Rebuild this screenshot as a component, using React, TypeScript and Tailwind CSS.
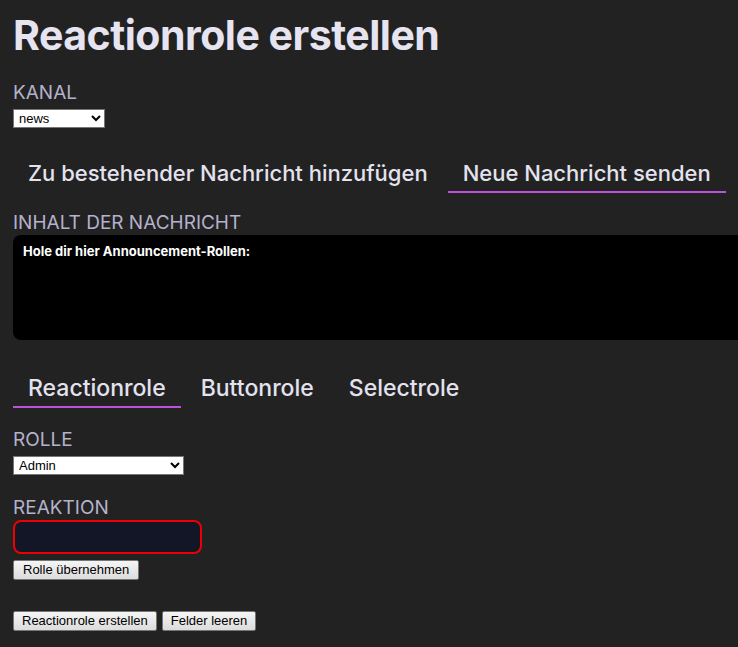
const labelCls = "block text-[19px] leading-[24px] text-[#b4b2cc] uppercase";
const selectCls =
  "h-[19px] bg-white border border-[#767676] text-black text-[13px] leading-[17px] pl-[1px] font-['Liberation_Sans',Arial,sans-serif]";
const btnCls =
  "h-[20px] px-[8px] text-[13px] leading-[16px] text-black border border-[#767676] rounded-[2px] bg-gradient-to-b from-[#f5f5f5] to-[#dcdcdc] font-['Liberation_Sans',Arial,sans-serif]";

const Tab = ({ label, active, big }: { label: string; active?: boolean; big?: boolean }) => (
  <div
    className={`px-[15px] pt-[6px] pb-[4px] leading-[28px] font-medium text-[#e4e2ef] border-b-2 ${
      big ? "text-[23px]" : "text-[22px]"
    } ${active ? "border-[#c050dc]" : "border-transparent"}`}
  >
    {label}
  </div>
);

const App = () => {
  return (
    <div className="h-screen w-full overflow-hidden bg-[#222222] pl-[13px] font-['Inter',sans-serif] text-[#e4e2ef]">
      <h1 className="pt-[9px] text-[41px] leading-[52px] font-bold tracking-[-0.5px] text-[#e6e4f0]">
        Reactionrole erstellen
      </h1>

      <div className="mt-[20px]">
        <label className={labelCls}>Kanal</label>
        <select className={`${selectCls} mt-[4px] w-[92px]`} defaultValue="news">
          <option>news</option>
          <option>general</option>
        </select>
      </div>

      <div className="mt-[24px] flex gap-[5px]">
        <Tab label="Zu bestehender Nachricht hinzufügen" />
        <Tab label="Neue Nachricht senden" active />
      </div>

      <div className="mt-[18px]">
        <label className={labelCls}>Inhalt der Nachricht</label>
        <div className="h-[105px] w-[760px] rounded-[8px] bg-black px-[10px] py-[7px] text-[13px] leading-[18px] font-bold text-white">
          Hole dir hier Announcement-Rollen:
        </div>
      </div>

      <div className="mt-[28px] flex gap-[5px]">
        <Tab label="Reactionrole" active big />
        <Tab label="Buttonrole" big />
        <Tab label="Selectrole" big />
      </div>

      <div className="mt-[20px]">
        <label className={labelCls}>Rolle</label>
        <select className={`${selectCls} mt-[4px] w-[171px]`} defaultValue="Admin">
          <option>Admin</option>
          <option>Moderator</option>
        </select>
      </div>

      <div className="mt-[20px]">
        <label className={labelCls}>Reaktion</label>
        <div className="h-[34px] w-[189px] rounded-[8px] border-2 border-[#ee0000] bg-[#131627]" />
        <button className={`${btnCls} mt-[6px] px-[9px]`}>Rolle übernehmen</button>
      </div>

      <div className="mt-[31px] flex gap-[5px]">
        <button className={btnCls}>Reactionrole erstellen</button>
        <button className={btnCls}>Felder leeren</button>
      </div>
    </div>
  );
};

export default App;
